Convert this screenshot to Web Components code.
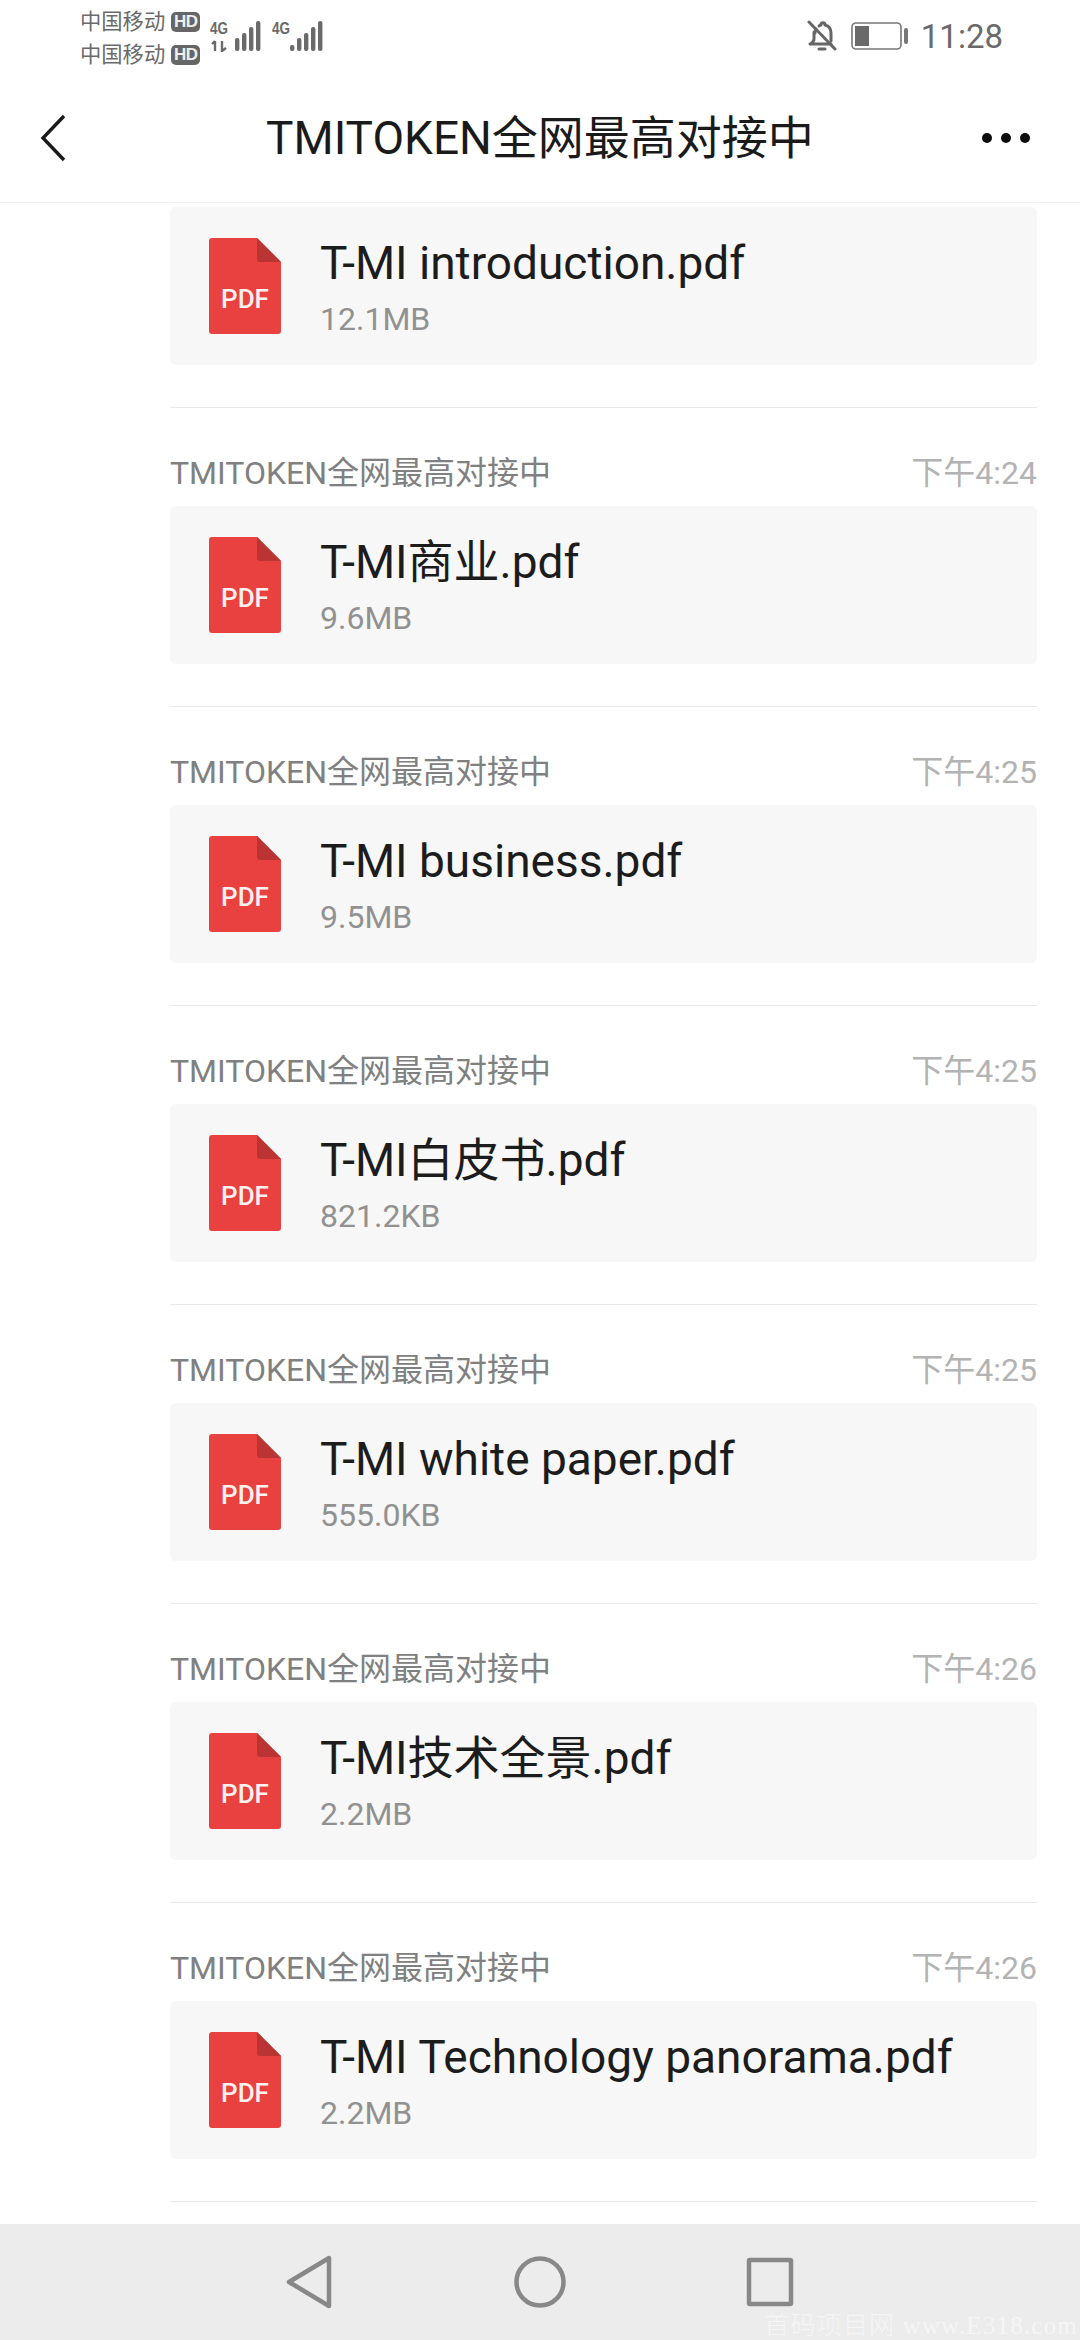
<!DOCTYPE html>
<html lang="zh">
<head>
<meta charset="utf-8">
<title>TMITOKEN全网最高对接中</title>
<style>
    html, body { margin: 0; padding: 0; background: #fff; }
    body { font-family: Roboto, "Noto Sans CJK SC", sans-serif; }
</style>
</head>
<body>
<chat-screen>
    <status-bar slot="top"></status-bar>
    <title-bar slot="top">TMITOKEN全网最高对接中</title-bar>

    <file-message first><span slot="name">T-MI introduction.pdf</span><span slot="size">12.1MB</span></file-message>
    <file-message sender="TMITOKEN全网最高对接中" time="下午4:24"><span slot="name">T-MI商业.pdf</span><span slot="size">9.6MB</span></file-message>
    <file-message sender="TMITOKEN全网最高对接中" time="下午4:25"><span slot="name">T-MI business.pdf</span><span slot="size">9.5MB</span></file-message>
    <file-message sender="TMITOKEN全网最高对接中" time="下午4:25"><span slot="name">T-MI白皮书.pdf</span><span slot="size">821.2KB</span></file-message>
    <file-message sender="TMITOKEN全网最高对接中" time="下午4:25"><span slot="name">T-MI white paper.pdf</span><span slot="size">555.0KB</span></file-message>
    <file-message sender="TMITOKEN全网最高对接中" time="下午4:26"><span slot="name">T-MI技术全景.pdf</span><span slot="size">2.2MB</span></file-message>
    <file-message sender="TMITOKEN全网最高对接中" time="下午4:26"><span slot="name">T-MI Technology panorama.pdf</span><span slot="size">2.2MB</span></file-message>

    <nav-bar slot="bottom"></nav-bar>
</chat-screen>

<script>
const screenTemplate = document.createElement('template')
screenTemplate.innerHTML = `
    <style>
        :host {
            display: flex;
            flex-direction: column;
            width: 1080px;
            height: 2340px;
            overflow: hidden;
            background: #fff;
        }
        .list {
            flex: 1;
            min-height: 0;
            overflow: hidden;
        }
    </style>
    <slot name="top"></slot>
    <div class="list"><slot></slot></div>
    <slot name="bottom"></slot>
`

const statusTemplate = document.createElement('template')
statusTemplate.innerHTML = `
    <style>
        :host {
            display: flex;
            align-items: flex-start;
            height: 74px;
            padding-left: 80px;
            padding-right: 77px;
            color: #6a6a6a;
        }
        .carriers {
            display: flex;
            flex-direction: column;
            gap: 8px;
            padding-top: 9px;
            width: 130px;
        }
        .carrier {
            display: flex;
            align-items: center;
            gap: 6px;
            height: 25px;
            font-size: 21.3px;
            line-height: 25px;
            white-space: nowrap;
        }
        .hd {
            width: 29px;
            height: 20px;
            border-radius: 5px;
            background: #666;
            color: #eee;
            font: bold 17px/20px "Liberation Sans", sans-serif;
            text-align: center;
            letter-spacing: -0.5px;
        }
        .signal { display: block; margin-top: 18px; }
        .signal.two { margin-left: 10px; }
        .g {
            font: bold 17px "Liberation Sans", sans-serif;
            fill: #6a6a6a;
        }
        .right {
            margin-left: auto;
            display: flex;
            align-items: flex-start;
        }
        .bell { display: block; margin-top: 20px; }
        .battery { display: block; margin-top: 22px; margin-left: 14px; }
        .time {
            margin-left: 12px;
            font-size: 33px;
            line-height: 74px;
        }
    </style>
    <div class="carriers">
        <div class="carrier">中国移动<span class="hd">HD</span></div>
        <div class="carrier">中国移动<span class="hd">HD</span></div>
    </div>
    <svg class="signal" width="52" height="34" viewBox="0 0 52 34">
        <text class="g" x="0" y="16" textLength="18" lengthAdjust="spacingAndGlyphs">4G</text>
        <path d="M5 23v10M2 26l3-3M12 23v10l4-3" fill="none" stroke="#6a6a6a" stroke-width="2.4"/>
        <g fill="#6a6a6a">
            <rect x="25" y="20" width="4.4" height="13" rx="2"/>
            <rect x="32" y="15" width="4.4" height="18" rx="2"/>
            <rect x="39" y="9" width="4.4" height="24" rx="2"/>
            <rect x="46" y="3" width="4.4" height="30" rx="2"/>
        </g>
    </svg>
    <svg class="signal two" width="52" height="34" viewBox="0 0 52 34">
        <text class="g" x="0" y="16" textLength="18" lengthAdjust="spacingAndGlyphs">4G</text>
        <g fill="#6a6a6a">
            <rect x="18" y="27" width="4.4" height="6" rx="2"/>
            <rect x="25" y="20" width="4.4" height="13" rx="2"/>
            <rect x="32" y="15" width="4.4" height="18" rx="2"/>
            <rect x="39" y="9" width="4.4" height="24" rx="2"/>
            <rect x="46" y="3" width="4.4" height="30" rx="2"/>
        </g>
    </svg>
    <div class="right">
        <svg class="bell" width="30" height="32" viewBox="0 0 30 32" fill="none" stroke="#666" stroke-width="3" stroke-linecap="round" stroke-linejoin="round">
            <path d="M8 13c0-2 0-3 1-4M12 6c1-1 2-1 2-1 0-3 4-3 4 0 4 1 6 4 6 8v8"/>
            <path d="M7 12v7c0 2-2 4-4 5h21"/>
            <path d="M12 29h6"/>
            <path d="M2 2l26 27"/>
        </svg>
        <svg class="battery" width="58" height="28" viewBox="0 0 58 28">
            <rect x="1" y="1" width="49" height="26" rx="4" fill="#fff" stroke="#777" stroke-width="1.6"/>
            <rect x="4" y="4" width="14" height="20" fill="#6a6a6a"/>
            <rect x="53" y="6" width="4" height="16" rx="2" fill="#777"/>
        </svg>
        <div class="time">11:28</div>
    </div>
`

const titleTemplate = document.createElement('template')
titleTemplate.innerHTML = `
    <style>
        :host {
            display: grid;
            grid-template-columns: 120px 1fr 120px;
            align-items: center;
            height: 128px;
            border-bottom: 1px solid #f1f1f1;
            box-sizing: content-box;
        }
        .back { display: block; margin-left: 38px; }
        .title {
            text-align: center;
            font-size: 46px;
            line-height: 128px;
            color: #1a1a1a;
            white-space: nowrap;
        }
        .more { display: block; margin-left: 20px; }
    </style>
    <svg class="back" width="32" height="50" viewBox="0 0 32 50" fill="none" stroke="#1a1a1a" stroke-width="3.4">
        <path d="M26 3L5 25l21 22"/>
    </svg>
    <div class="title"><slot></slot></div>
    <svg class="more" width="52" height="12" viewBox="0 0 52 12" fill="#0c0c0c">
        <circle cx="7" cy="6" r="5"/>
        <circle cx="26" cy="6" r="5"/>
        <circle cx="45" cy="6" r="5"/>
    </svg>
`

const pdfTemplate = document.createElement('template')
pdfTemplate.innerHTML = `
    <style>
        :host {
            position: relative;
            display: block;
            width: 72px;
            height: 96px;
            flex: none;
        }
        svg { display: block; }
        .label {
            position: absolute;
            left: 0;
            right: 0;
            top: 46px;
            text-align: center;
            font: 500 26px/30px Roboto, sans-serif;
            color: #fdf1f0;
        }
    </style>
    <svg width="72" height="96" viewBox="0 0 72 96">
        <path d="M3 0H48L72 24V93a3 3 0 0 1-3 3H3a3 3 0 0 1-3-3V3a3 3 0 0 1 3-3z" fill="#e8413f"/>
        <path d="M48 0L72 24H51a3 3 0 0 1-3-3z" fill="#b93432"/>
    </svg>
    <div class="label">PDF</div>
`

const messageTemplate = document.createElement('template')
messageTemplate.innerHTML = `
    <style>
        :host {
            display: block;
            margin: 0 43px 0 170px;
            padding-bottom: 42px;
            border-bottom: 1px solid #e9e9e9;
        }
        :host([first]) .head { display: none; }
        :host([first]) { padding-top: 4px; }
        .head {
            display: flex;
            justify-content: space-between;
            align-items: center;
            height: 98px;
            padding-top: 32px;
            box-sizing: border-box;
            line-height: 50px;
            font-size: 32px;
            color: #808080;
            white-space: nowrap;
        }
        .time { color: #b3b3b3; }
        .card {
            display: flex;
            align-items: center;
            gap: 39px;
            height: 158px;
            padding-left: 39px;
            box-sizing: border-box;
            background: #f7f7f7;
            border-radius: 6px;
        }
        .name {
            font-size: 46px;
            line-height: 60px;
            color: #1c1c1c;
            white-space: nowrap;
        }
        .size {
            margin-top: 6px;
            font-size: 32px;
            line-height: 40px;
            color: #919191;
        }
    </style>
    <div class="head"><span class="sender"></span><span class="time"></span></div>
    <div class="card">
        <pdf-icon></pdf-icon>
        <div>
            <div class="name"><slot name="name"></slot></div>
            <div class="size"><slot name="size"></slot></div>
        </div>
    </div>
`

const navTemplate = document.createElement('template')
navTemplate.innerHTML = `
    <style>
        :host {
            position: relative;
            display: flex;
            justify-content: center;
            align-items: center;
            gap: 170px;
            height: 116px;
            background: #ececec;
        }
        svg { display: block; width: 60px; height: 56px; }
        .mark {
            position: absolute;
            right: 2px;
            bottom: 0;
            font: 25px/28px "Liberation Serif", "Noto Sans CJK SC", serif;
            font-weight: 300;
            color: #f5f5f5;
            white-space: nowrap;
            letter-spacing: 1.2px;
        }
    </style>
    <svg viewBox="0 0 60 56" fill="none" stroke="#888" stroke-width="4.5" stroke-linejoin="round">
        <path d="M9 28L49 4v48z"/>
    </svg>
    <svg viewBox="0 0 60 56" fill="none" stroke="#888" stroke-width="4.5">
        <circle cx="30" cy="28" r="23.5"/>
    </svg>
    <svg viewBox="0 0 60 56" fill="none" stroke="#888" stroke-width="4.5" stroke-linejoin="round">
        <rect x="9" y="6" width="42" height="44" rx="1"/>
    </svg>
    <div class="mark">首码项目网 www.E318.com</div>
`

class ChatScreen extends HTMLElement {
    constructor() {
        super()
        this.attachShadow({ mode: 'open' }).appendChild(screenTemplate.content.cloneNode(true))
    }
}

class StatusBar extends HTMLElement {
    constructor() {
        super()
        this.attachShadow({ mode: 'open' }).appendChild(statusTemplate.content.cloneNode(true))
    }
}

class TitleBar extends HTMLElement {
    constructor() {
        super()
        this.attachShadow({ mode: 'open' }).appendChild(titleTemplate.content.cloneNode(true))
    }
}

class PdfIcon extends HTMLElement {
    constructor() {
        super()
        this.attachShadow({ mode: 'open' }).appendChild(pdfTemplate.content.cloneNode(true))
    }
}

class FileMessage extends HTMLElement {
    constructor() {
        super()
        this.attachShadow({ mode: 'open' }).appendChild(messageTemplate.content.cloneNode(true))
    }

    connectedCallback() {
        this.shadowRoot.querySelector('.sender').textContent = this.getAttribute('sender') || ''
        this.shadowRoot.querySelector('.time').textContent = this.getAttribute('time') || ''
    }
}

class NavBar extends HTMLElement {
    constructor() {
        super()
        this.attachShadow({ mode: 'open' }).appendChild(navTemplate.content.cloneNode(true))
    }
}

customElements.define('chat-screen', ChatScreen)
customElements.define('status-bar', StatusBar)
customElements.define('title-bar', TitleBar)
customElements.define('pdf-icon', PdfIcon)
customElements.define('file-message', FileMessage)
customElements.define('nav-bar', NavBar)
</script>
</body>
</html>
